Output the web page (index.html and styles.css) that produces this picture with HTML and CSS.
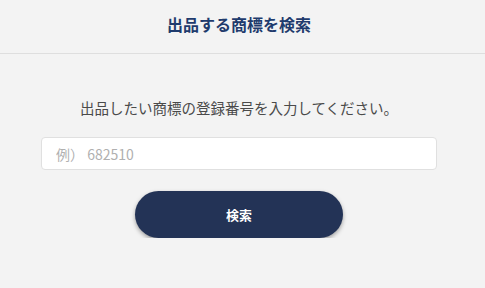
FILE: index.html
```html
<!DOCTYPE html>
<html lang="ja">
<head>
<meta charset="utf-8">
<link rel="stylesheet" href="styles.css">
</head>
<body>
<header class="header">
  <div class="header-inner">
    <h1 class="title">出品する商標を検索</h1>
  </div>
</header>
<main class="main">
  <p class="lead">出品したい商標の登録番号を入力してください。</p>
  <input class="field" type="text" placeholder="例） 682510">
  <button class="btn" type="button">検索</button>
</main>
</body>
</html>
```
FILE: styles.css
```css
html, body {
  margin: 0;
  padding: 0;
  background: #f3f3f3;
  font-family: "Noto Sans CJK JP", "Noto Sans", sans-serif;
}
.header {
  height: 53px;
  border-bottom: 1px solid #dedede;
}
.header-inner {
  width: 478px;
  height: 100%;
  display: flex;
  align-items: center;
  justify-content: center;
}
.title {
  margin: 0;
  font-size: 16px;
  font-weight: 700;
  color: #1f3b6d;
  line-height: 20px;
  padding-bottom: 5px;
}
.main {
  width: 478px;
  display: flex;
  flex-direction: column;
  align-items: center;
  padding-top: 44px;
}
.lead {
  margin: 0;
  font-size: 14.5px;
  line-height: 20px;
  color: #4a4a4a;
}
.field {
  margin-top: 19px;
  box-sizing: border-box;
  width: 396px;
  height: 33px;
  border: 1px solid #e0e0e0;
  border-radius: 4px;
  background: #fff;
  padding: 0 14px;
  font-family: "Noto Sans CJK JP", "Noto Sans", sans-serif;
  font-size: 14px;
  color: #333;
  outline: none;
}
.field::placeholder {
  color: #b0b0b0;
}
.btn {
  margin-top: 21px;
  width: 208px;
  height: 47px;
  border: none;
  border-radius: 24px;
  background: #233356;
  color: #fff;
  font-family: "Noto Sans CJK JP", "Noto Sans", sans-serif;
  font-size: 13px;
  font-weight: 700;
  box-shadow: 0 2px 4px rgba(0,0,0,0.35);
}
```
